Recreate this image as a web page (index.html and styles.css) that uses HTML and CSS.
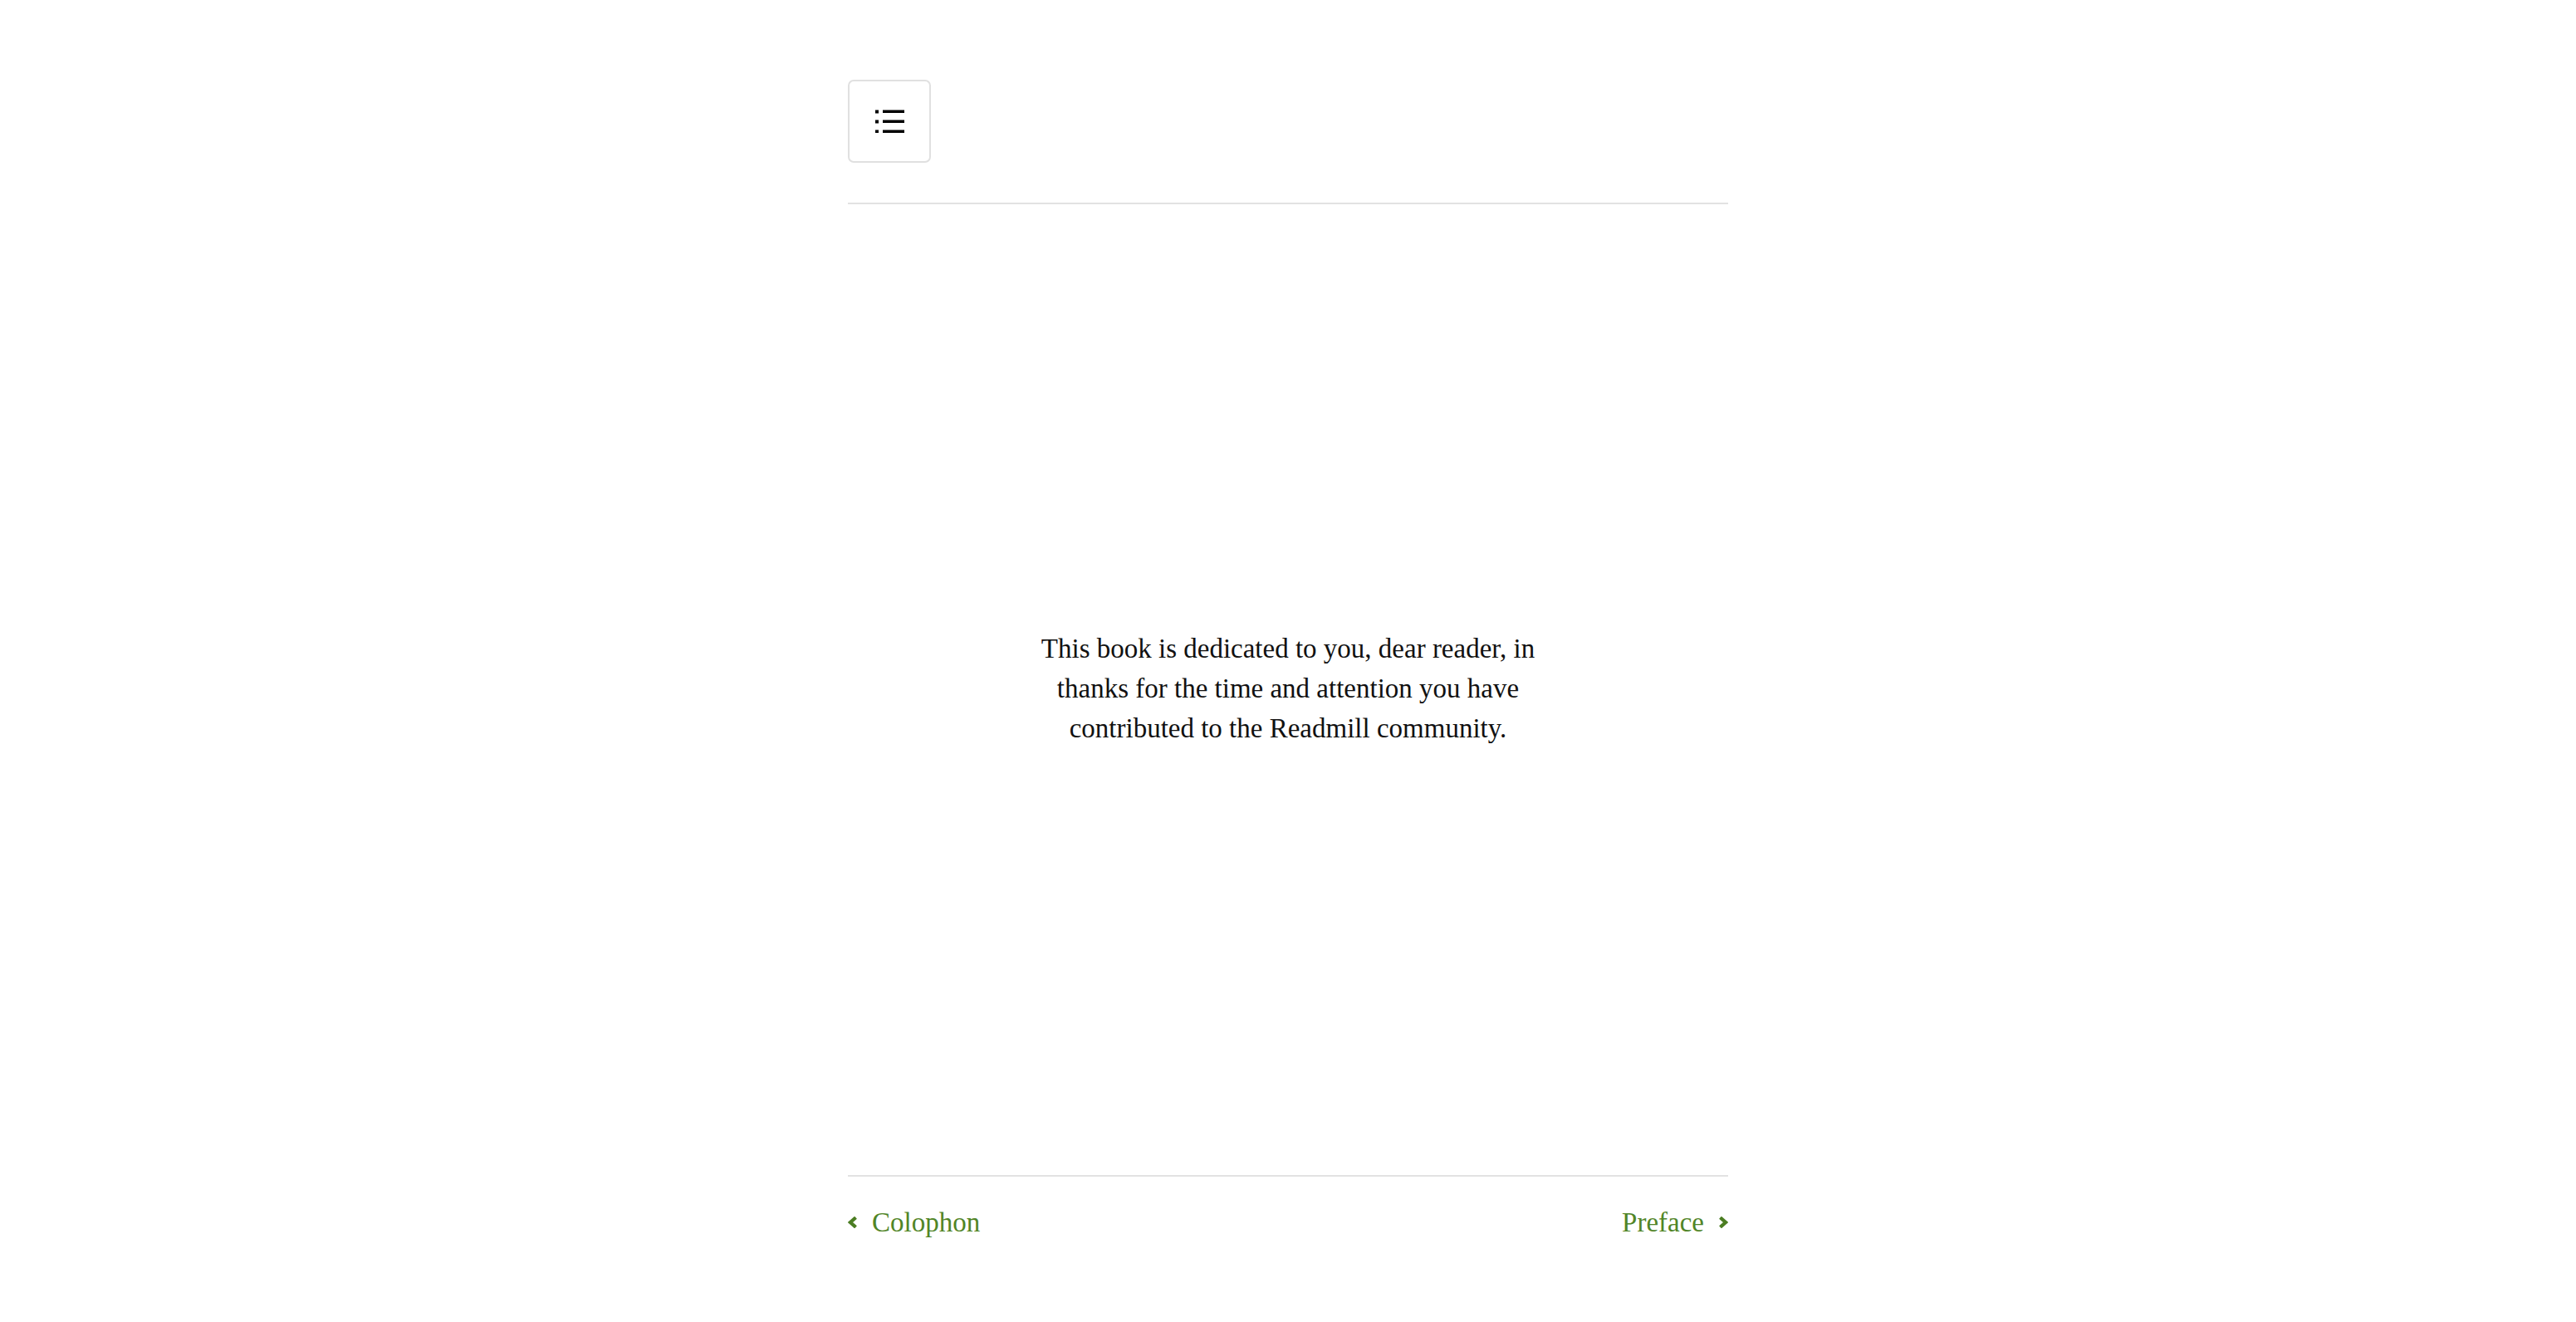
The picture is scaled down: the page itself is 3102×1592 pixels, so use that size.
FILE: index.html
```html
<!DOCTYPE html>
<html lang="en">
<head>
<meta charset="utf-8">
<title>Dedication</title>
<link rel="stylesheet" href="styles.css">
</head>
<body>
<div class="page">
  <header class="top">
    <button class="toc-btn" type="button" aria-label="Table of contents">
      <svg class="toc-icon" width="35" height="28" viewBox="0 0 35 28" aria-hidden="true">
        <rect x="0" y="0.5" width="4" height="4" fill="#000"/>
        <rect x="9" y="0.5" width="26" height="3.5" fill="#000"/>
        <rect x="0" y="12.5" width="4" height="4" fill="#000"/>
        <rect x="9" y="12.5" width="26" height="3.5" fill="#000"/>
        <rect x="0" y="24.5" width="4" height="4" fill="#000"/>
        <rect x="9" y="24.5" width="26" height="3.5" fill="#000"/>
      </svg>
    </button>
  </header>
  <main class="content">
    <p class="dedication">This book is dedicated to you, dear reader, in thanks for the time and attention you have contributed to the Readmill community.</p>
  </main>
  <footer class="bottom">
    <nav class="pager">
      <a class="pager-link" href="#">
        <svg class="chev" width="12" height="14" viewBox="0 0 12 14" aria-hidden="true"><polyline points="9.5,1.2 3,7 9.5,12.8" fill="none" stroke="#4b7d22" stroke-width="4.2"/></svg>
        <span>Colophon</span>
      </a>
      <a class="pager-link" href="#">
        <span>Preface</span>
        <svg class="chev" width="12" height="14" viewBox="0 0 12 14" aria-hidden="true"><polyline points="2.5,1.2 9,7 2.5,12.8" fill="none" stroke="#4b7d22" stroke-width="4.2"/></svg>
      </a>
    </nav>
  </footer>
</div>
</body>
</html>
```

FILE: styles.css
```css
* { box-sizing: border-box; }

html, body {
  margin: 0;
  padding: 0;
  background: #fff;
}

body {
  font-family: "Liberation Serif", "Times New Roman", serif;
  color: #111;
}

.page {
  width: 1060px;
  margin: 0 auto;
  min-height: 100vh;
  display: flex;
  flex-direction: column;
}

.top {
  padding: 96px 0 48px;
  border-bottom: 2px solid #e2e2e2;
}

.toc-btn {
  width: 100px;
  height: 100px;
  border: 2px solid #e0e0e0;
  border-radius: 7px;
  background: #fff;
  padding: 0;
  display: flex;
  align-items: center;
  justify-content: center;
  cursor: pointer;
}

.toc-icon { display: block; }

.content {
  flex: 1;
  display: flex;
  align-items: center;
  justify-content: center;
  padding-bottom: 4px;
}

.dedication {
  margin: 0;
  width: 640px;
  text-align: center;
  font-size: 33px;
  line-height: 48px;
  color: #111;
}

.bottom {
  border-top: 2px solid #e2e2e2;
  padding: 31px 0 96px;
}

.pager {
  display: flex;
  justify-content: space-between;
  align-items: center;
}

.pager-link {
  display: flex;
  align-items: center;
  gap: 17px;
  color: #518527;
  text-decoration: none;
  font-size: 33px;
  line-height: 48px;
}

.chev { display: block; }
```
